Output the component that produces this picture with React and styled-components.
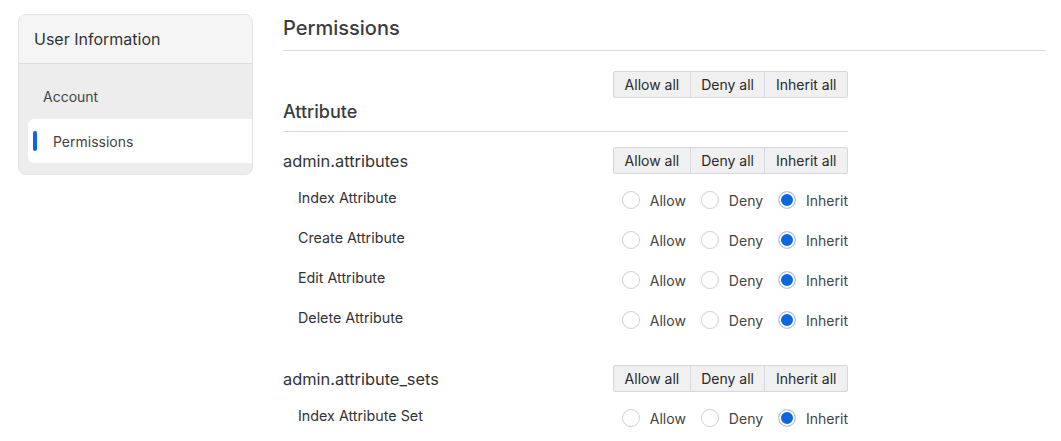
import React, { useState } from "react";
import styled, { createGlobalStyle } from "styled-components";

const Global = createGlobalStyle`
  html, body { margin: 0; padding: 0; background: #fff; }
  body { font-family: Inter, "Noto Sans", sans-serif; color: #333; -webkit-font-smoothing: antialiased; }
  * { box-sizing: border-box; }
`;

const Page = styled.div`
  display: flex;
  align-items: flex-start;
  gap: 30px;
  padding: 14px 15px 0 18px;
`;

const SideCard = styled.nav`
  width: 235px;
  flex: none;
  background: #ededed;
  border: 1px solid #e4e4e4;
  border-radius: 8px;
  overflow: hidden;
`;

const SideHeader = styled.div`
  height: 49px;
  display: flex;
  align-items: center;
  padding-left: 15px;
  background: #f5f5f5;
  border-bottom: 1px solid #dcdcdc;
  font-size: 16px;
  color: #333;
`;

const SideBody = styled.div`
  padding: 10px 0 11px 0;
`;

const NavItem = styled.div`
  position: relative;
  height: 44px;
  display: flex;
  align-items: center;
  font-size: 14px;
  color: #444;
  margin-top: ${(p) => (p.$active ? "1px" : "0")};
  margin-left: ${(p) => (p.$active ? "9px" : "0")};
  padding-left: ${(p) => (p.$active ? "25px" : "24px")};
  background: ${(p) => (p.$active ? "#fff" : "transparent")};
  border-radius: ${(p) => (p.$active ? "6px 0 0 6px" : "0")};

  &::before {
    content: "";
    display: ${(p) => (p.$active ? "block" : "none")};
    position: absolute;
    left: 5px;
    top: 12px;
    width: 4px;
    height: 20px;
    border-radius: 2px;
    background: #0a67de;
  }
`;

const Main = styled.main`
  flex: 1;
  min-width: 0;
`;

const Title = styled.h1`
  margin: 0;
  font-size: 20px;
  font-weight: 500;
  line-height: 28px;
  padding: 0 0 8px;
  border-bottom: 1px solid #d6dae1;
  color: #3d3d3d;
`;

const Section = styled.section`
  width: 565px;
`;

const TopBar = styled.div`
  display: flex;
  justify-content: flex-end;
  margin-top: 20px;
`;

const SectionTitle = styled.h2`
  margin: 0;
  font-size: 18px;
  font-weight: 500;
  line-height: 26px;
  padding: 1px 0 6px;
  border-bottom: 1px solid #d6dae1;
  color: #3d3d3d;
`;

const GroupHead = styled.div`
  display: flex;
  align-items: center;
  justify-content: space-between;
  margin-top: ${(p) => (p.$first ? "15px" : "25px")};
  margin-bottom: 6px;
`;

const GroupName = styled.div`
  font-size: 16.4px;
  color: #333;
`;

const BtnGroup = styled.div`
  display: flex;
  border: 1px solid #d5d8df;
  border-radius: 2px;
  background: #f0f0f1;
`;

const Btn = styled.button`
  height: 25px;
  padding: 0 10.5px;
  border: 0;
  border-left: ${(p) => (p.$first ? "0" : "1px solid #d5d8df")};
  background: transparent;
  font-family: inherit;
  font-size: 14px;
  color: #2a2a2a;
  cursor: pointer;
`;

const Row = styled.div`
  height: 40px;
  display: flex;
  align-items: center;
  justify-content: space-between;
  padding-left: 15px;
`;

const RowLabel = styled.div`
  font-size: 14.3px;
  color: #333;
  padding-bottom: 5px;
`;

const Choices = styled.div`
  display: flex;
  align-items: center;
  gap: 15px;
`;

const Choice = styled.label`
  display: flex;
  align-items: center;
  gap: 10px;
  font-size: 14px;
  color: #444;
  cursor: pointer;
`;

const Dot = styled.span`
  width: 18px;
  height: 18px;
  border-radius: 50%;
  border: 1px solid #cdd1d8;
  background: ${(p) => (p.$on ? "#0a67de" : "#fff")};
  box-shadow: ${(p) => (p.$on ? "inset 0 0 0 2px #fff" : "none")};
  flex: none;
`;

const ButtonSet = () => (
  <BtnGroup>
    <Btn $first>Allow all</Btn>
    <Btn>Deny all</Btn>
    <Btn>Inherit all</Btn>
  </BtnGroup>
);

const groups = [
  {
    name: "admin.attributes",
    rows: ["Index Attribute", "Create Attribute", "Edit Attribute", "Delete Attribute"],
  },
  {
    name: "admin.attribute_sets",
    rows: ["Index Attribute Set"],
  },
];

const options = ["Allow", "Deny", "Inherit"];

export default function App() {
  const [values, setValues] = useState({});
  const valueOf = (key) => values[key] || "Inherit";

  return (
    <>
      <Global />
      <Page>
        <SideCard>
          <SideHeader>User Information</SideHeader>
          <SideBody>
            <NavItem>Account</NavItem>
            <NavItem $active>Permissions</NavItem>
          </SideBody>
        </SideCard>
        <Main>
          <Title>Permissions</Title>
          <Section>
            <TopBar>
              <ButtonSet />
            </TopBar>
            <SectionTitle>Attribute</SectionTitle>
            {groups.map((g, gi) => (
              <div key={g.name}>
                <GroupHead $first={gi === 0}>
                  <GroupName>{g.name}</GroupName>
                  <ButtonSet />
                </GroupHead>
                {g.rows.map((r) => {
                  const key = g.name + "/" + r;
                  return (
                    <Row key={r}>
                      <RowLabel>{r}</RowLabel>
                      <Choices>
                        {options.map((o) => (
                          <Choice
                            key={o}
                            onClick={() => setValues((v) => ({ ...v, [key]: o }))}
                          >
                            <Dot $on={valueOf(key) === o} />
                            {o}
                          </Choice>
                        ))}
                      </Choices>
                    </Row>
                  );
                })}
              </div>
            ))}
          </Section>
        </Main>
      </Page>
    </>
  );
}
